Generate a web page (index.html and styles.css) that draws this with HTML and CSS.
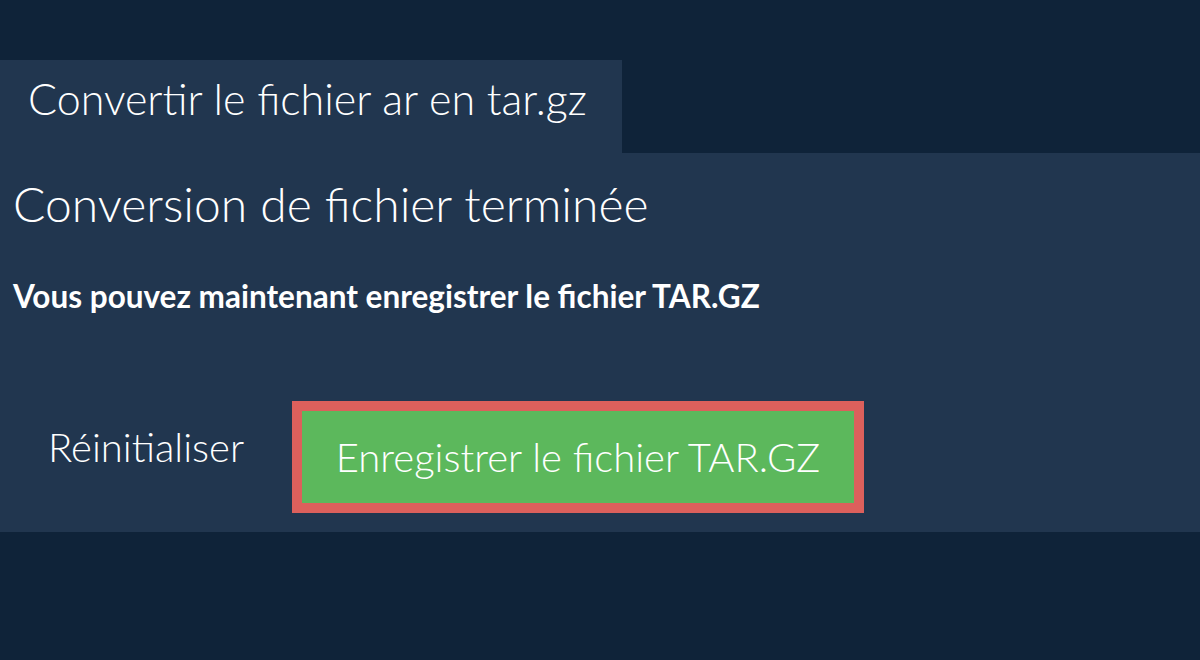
FILE: index.html
```html
<!DOCTYPE html>
<html lang="fr">
<head>
<meta charset="utf-8">
<title>Convertir le fichier ar en tar.gz</title>
<link rel="stylesheet" href="styles.css">
</head>
<body>
<main class="page">
  <div class="tab">Convertir le fichier ar en tar.gz</div>
  <section class="panel">
    <h1 class="heading">Conversion de fichier terminée</h1>
    <p class="note">Vous pouvez maintenant enregistrer le fichier TAR.GZ</p>
    <div class="actions">
      <button class="btn-reset" type="button">Réinitialiser</button>
      <button class="btn-save" type="button">Enregistrer le fichier TAR.GZ</button>
    </div>
  </section>
</main>
</body>
</html>
```

FILE: styles.css
```css
* { box-sizing: border-box; }
html, body {
  margin: 0;
  padding: 0;
  background: #0f2339;
  font-family: Lato, "Open Sans", sans-serif;
  color: #ffffff;
}
.page {
  padding-top: 60px;
}
.tab {
  display: block;
  width: 622px;
  height: 93px;
  background: #21364f;
  padding: 13px 0 0 28px;
  font-size: 43px;
  font-weight: 300;
  line-height: 52px;
  white-space: nowrap;
}
.panel {
  background: #21364f;
  height: 379px;
  padding: 22px 13px 0;
}
.heading {
  margin: 0;
  font-size: 48px;
  font-weight: 300;
  line-height: 57px;
  white-space: nowrap;
}
.note {
  margin: 45px 0 0;
  font-size: 31.5px;
  font-weight: 700;
  line-height: 38px;
  white-space: nowrap;
}
.actions {
  display: flex;
  align-items: flex-start;
  margin-top: 86px;
}
.btn-reset {
  background: none;
  border: 0;
  color: #ffffff;
  font-family: inherit;
  font-size: 40px;
  font-weight: 300;
  line-height: 48px;
  margin-top: 22px;
  width: 279px;
  text-align: left;
  padding: 0 0 0 35px;
  white-space: nowrap;
}
.btn-save {
  background: #5cb85c;
  border: 10px solid #dc605c;
  color: #ffffff;
  font-family: inherit;
  font-size: 40px;
  font-weight: 300;
  line-height: 92px;
  width: 572px;
  height: 112px;
  padding: 0;
  text-align: center;
  white-space: nowrap;
}
```
